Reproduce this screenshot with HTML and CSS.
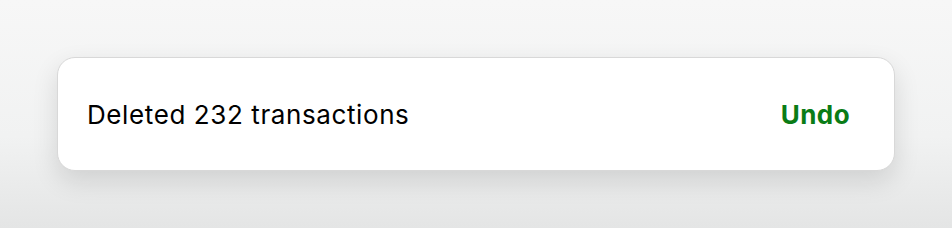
FILE: index.html
```html
<!DOCTYPE html>
<html lang="en">
  <head>
    <meta charset="UTF-8" />
    <title>Toast</title>
    <link rel="stylesheet" href="styles.css">
  </head>
  <body>
    <div class="stage">
      <div class="toast">
        <span class="toast-message">Deleted 232 transactions</span>
        <button class="toast-action">Undo</button>
      </div>
    </div>
  </body>
</html>
```
FILE: styles.css
```css
* {
  margin: 0;
  padding: 0;
  box-sizing: border-box;
}
html,
body {
  height: 100%;
}
body {
  font-family: Inter, "Noto Sans", sans-serif;
  background: linear-gradient(180deg, #f7f7f7 0%, #f1f2f2 60%, #e4e5e5 100%);
  color: #000000;
}
.stage {
  padding: 57px 57px 0 57px;
}
.toast {
  display: flex;
  align-items: center;
  justify-content: space-between;
  height: 114px;
  padding: 0 44px 0 29px;
  background: #ffffff;
  border: 1px solid #d8d8d8;
  border-radius: 18px;
  box-shadow: 0 10px 26px rgba(0, 0, 0, 0.12);
}
.toast-message {
  font-size: 26px;
  font-weight: 400;
  letter-spacing: 0.6px;
}
.toast-action {
  font-family: inherit;
  font-size: 26px;
  font-weight: 700;
  letter-spacing: 0.4px;
  color: #0a7c16;
  background: none;
  border: none;
  cursor: pointer;
}
```
